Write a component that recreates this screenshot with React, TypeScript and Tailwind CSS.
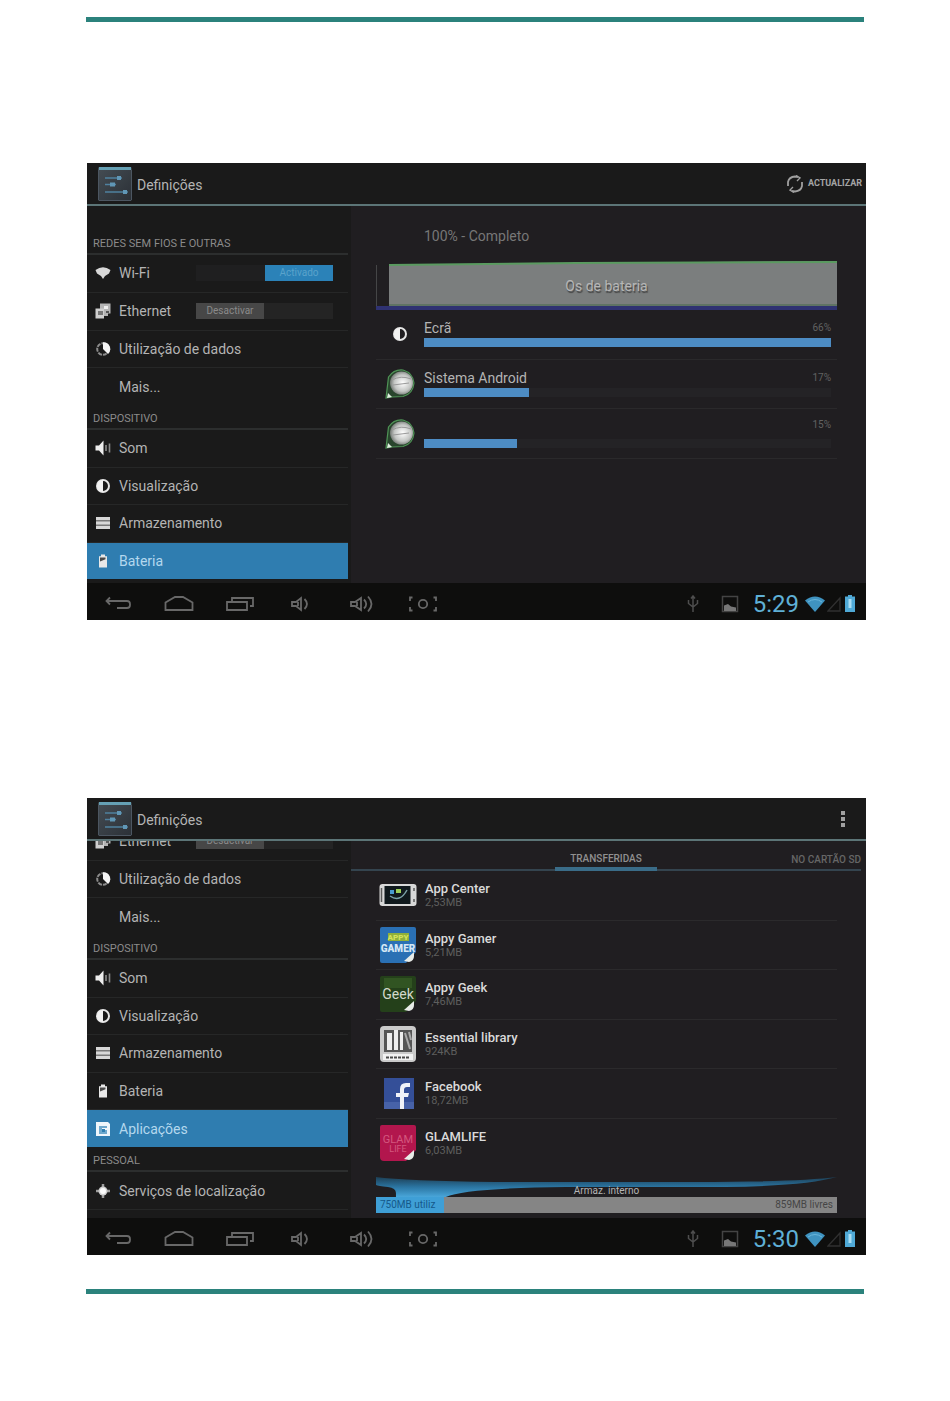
import type { ReactNode } from "react";

type IconName =
  | "wifi"
  | "ethernet"
  | "data"
  | "none"
  | "sound"
  | "display"
  | "storage"
  | "battery"
  | "apps"
  | "location";

function SideIcon({ name }: { name: IconName }) {
  return (
    <svg viewBox="0 0 16 16" className="h-4 w-4 shrink-0" fill="#d8d8d8" aria-hidden="true">
      {name === "wifi" && <path d="M.5 5Q8-.5 15.500 5L14 8.500 10 11 8 14 6 11 2 8.500Z" />}
      {name === "ethernet" && (
        <g>
          <path d="M5 .5h10.500v10H13V13H5Z" fill="#b4b4b4" />
          <path d="M.5 5.500h8.500v10H.5Z" fill="#cfcfcf" />
          <path d="M3 8h5v4H3Z" fill="#777777" />
          <path d="M9 3h4v3H9Z" fill="#ededed" />
          <path d="M11 8h3v2h-3Z" fill="#555555" />
        </g>
      )}
      {name === "data" && (
        <g>
          <circle cx="8" cy="8" r="5.800" fill="none" stroke="#8c8c8c" strokeWidth="2" strokeDasharray="4 1" />
          <path d="M8 1.200A6.800 6.800 0 0 1 13 13L8 8Z" fill="#f5f5f5" />
        </g>
      )}
      {name === "sound" && (
        <g>
          <path d="M.5 5.500H4L8.500.5v15L4 10.500H.5Z" fill="#eeeeee" />
          <path d="M11 5v6M14.500 3.500v9" stroke="#8a8a8a" strokeWidth="1.600" />
        </g>
      )}
      {name === "display" && (
        <g>
          <circle cx="8" cy="8" r="6" fill="none" stroke="#e6e6e6" strokeWidth="2" />
          <path d="M8 2A6 6 0 0 0 8 14Z" fill="#f2f2f2" />
        </g>
      )}
      {name === "storage" && <path d="M1 2h14v3.400H1ZM1 6.300h14v3.400H1ZM1 10.600h14v3.400H1Z" />}
      {name === "battery" && (
        <g>
          <path d="M6 1.500h4v1.800h2V14.500H4V3.300h2Z" fill="#e8e8e8" />
          <path d="M5 4.500h5.500v1.800L5 8.500Z" fill="#4a4a4a" />
        </g>
      )}
      {name === "apps" && (
        <g>
          <path d="M1 1h12l2 2v12H1Z" fill="#eef6fb" />
          <path d="M4 5h8v2H7v2h5v4H4Z" fill="#6fa9cd" />
          <path d="M7 8h3v3H7Z" fill="#2f7fb1" />
        </g>
      )}
      {name === "location" && (
        <g>
          <path d="M8 1v14M1 8h14" stroke="#9d9d9d" strokeWidth="2.500" />
          <circle cx="8" cy="8" r="4.500" fill="#cfcfcf" />
          <circle cx="8" cy="8" r="3" fill="#fafafa" />
        </g>
      )}
    </svg>
  );
}

function Toggle({ on, label }: { on: boolean; label: string }) {
  return (
    <button
      type="button"
      role="switch"
      aria-checked={on}
      aria-label={label}
      className={
        on
          ? "mr-[15px] flex h-4 w-[137px] shrink-0 justify-end bg-[#1f1f20]"
          : "mr-[15px] flex h-4 w-[137px] shrink-0 justify-start bg-[#242424]"
      }
    >
      <span
        className={
          on
            ? "h-4 w-[68px] bg-[#2b82b8] text-center text-[10px] leading-4 text-[#5aa3cb]"
            : "h-4 w-[68px] bg-[#474747] text-center text-[10px] leading-4 text-[#8a8a8a]"
        }
      >
        {on ? "Activado" : "Desactivar"}
      </span>
    </button>
  );
}

type Item = { icon: IconName; label: string; toggle?: boolean; active?: boolean };

function Group({ items, size }: { items: Item[]; size: string }) {
  return (
    <ul className={`flex flex-col ${size}`}>
      {items.map((item, i) => (
        <li
          key={item.label}
          className={
            item.active
              ? "flex flex-1 items-center bg-[#2f7db0] text-[#b4d8ee]"
              : i === items.length - 1
                ? "flex flex-1 items-center"
                : "flex flex-1 items-center border-b border-[#262727]"
          }
        >
          <a href="#" className="flex flex-1 items-center gap-2 pl-2 text-sm whitespace-nowrap">
            <SideIcon name={item.icon} />
            {item.label}
          </a>
          {item.toggle !== undefined && <Toggle on={item.toggle} label={item.label} />}
        </li>
      ))}
    </ul>
  );
}

function GroupTitle({ children }: { children: ReactNode }) {
  return (
    <h3 className="flex h-[25px] items-center border-b-2 border-[#2c2e2e] pt-1 pl-1.5 text-[11px] leading-4 text-[#8b8b8b]">
      {children}
    </h3>
  );
}

function SettingsLogo() {
  return (
    <svg viewBox="0 0 34 34" className="h-[34px] w-[34px] shrink-0" aria-hidden="true">
      <defs>
        <linearGradient id="tile" x1="0" y1="0" x2="1" y2="1">
          <stop offset="0" stopColor="#454d54" />
          <stop offset="1" stopColor="#2b3036" />
        </linearGradient>
      </defs>
      <rect width="34" height="34" rx="1.500" fill="url(#tile)" />
      <path d="M1 33.500h32M.5 3v30M33.500 3v30" stroke="#4c5661" />
      <path d="M1 0h32v3H1Z" fill="#65a0b4" />
      <path d="M7 11h17M7 17.500h11M7 25h23" stroke="#4f819f" strokeWidth="1.500" />
      <path d="M19 9h4v4h-4ZM12 15.500h5v4h-5ZM25 23h4v4h-4Z" fill="#6097b6" />
    </svg>
  );
}

function NavButton({ label, children }: { label: string; children: ReactNode }) {
  return (
    <button type="button" aria-label={label} className="flex w-[61px] justify-center">
      <svg viewBox="0 0 30 20" className="h-5 w-[30px]" fill="none" stroke="#686868" strokeWidth="1.800" aria-hidden="true">
        {children}
      </svg>
    </button>
  );
}

function NavBar({ time }: { time: string }) {
  return (
    <nav className="flex h-[37px] items-center bg-[#0e0e0d] pt-1 pr-[11px]">
      <NavButton label="Voltar">
        <path d="M4 7h20q3 0 3 3v1q0 3-3 3H14M7 3.500 3.500 7 7 10.500" />
      </NavButton>
      <NavButton label="Início">
        <path d="M1.500 16V8.500L11 3h8l9.500 5.500V16Z" />
      </NavButton>
      <NavButton label="Recentes">
        <path d="M2 8h20v8H2ZM7 7.500V4h21v8h-3" />
      </NavButton>
      <NavButton label="Diminuir volume">
        <path d="M6 8h4l5-4v12l-5-4H6ZM12 8v4M18.500 5q5 5 0 10" />
      </NavButton>
      <NavButton label="Aumentar volume">
        <path d="M4 8h4l6-4v12l-6-4H4ZM10 8v4M17 5.500q4.500 4.500 0 9M21 2.500q7 7.500 0 15" />
      </NavButton>
      <NavButton label="Captura de ecrã">
        <circle cx="15" cy="10" r="4.200" />
        <path d="M4.500 3.500H2V7M2 13v3.500h2.500M25.500 3.500H28V7M28 13v3.500h-2.500" />
      </NavButton>
      <div className="ml-auto flex items-center">
        <svg viewBox="0 0 12 18" className="mr-[22px] h-[18px] w-3" fill="none" stroke="#4e4e4e" strokeWidth="1.500" aria-hidden="true">
          <path d="M6 17V2M1.500 5v3.500L6 12l4.500-3.500V5M4 3.500 6 1l2 2.500" />
        </svg>
        <svg viewBox="0 0 18 18" className="mr-3.5 h-[18px] w-[18px]" aria-hidden="true">
          <path d="M1.500 1.500h15v15h-15Z" fill="none" stroke="#444444" strokeWidth="1.500" />
          <path d="M3 10.500 7 9l3 2.500 5 1V16H3Z" fill="#777777" />
        </svg>
        <time className="text-2xl leading-6 text-[#5fb0d6]">{time}</time>
        <svg viewBox="0 0 20 16" className="ml-1.5 h-4 w-5" aria-hidden="true">
          <path d="M0 4.500Q10-3.500 20 4.500L10 16Z" fill="#3f93c0" />
          <path d="M3 6Q10 1 17 6" fill="none" stroke="#69b6db" />
        </svg>
        <svg viewBox="0 0 14 16" className="ml-0.5 h-4 w-3.5" aria-hidden="true">
          <path d="M1 15 13 2v13Z" fill="none" stroke="#303030" strokeWidth="1.300" />
        </svg>
        <svg viewBox="0 0 10 17" className="ml-1 h-[17px] w-2.5" aria-hidden="true">
          <path d="M3 0h4v1.500h3V17H0V1.500h3Z" fill="#4fa9d6" />
          <path d="M3.500 4h3v9h-3Z" fill="#a9dcf2" />
        </svg>
      </div>
    </nav>
  );
}

function Screen({ action, side, time, children }: { action: ReactNode; side: ReactNode; time: string; children: ReactNode }) {
  return (
    <section className="bg-[#1a1a1a] text-[#b4b4b4]">
      <header className="flex h-[43px] items-center border-b-2 border-[#5c7577] pl-[11px]">
        <SettingsLogo />
        <h2 className="ml-[5px] flex-1 pt-0.5 text-sm">Definições</h2>
        {action}
      </header>
      <div className="flex h-[377px] overflow-hidden">
        <aside className="w-[264px] shrink-0 pr-[3px]">{side}</aside>
        <div className="min-w-0 flex-1 bg-[#201e21]">{children}</div>
      </div>
      <NavBar time={time} />
    </section>
  );
}

function AndroidIcon() {
  return (
    <svg viewBox="0 0 32 32" className="h-8 w-8" aria-hidden="true">
      <defs>
        <radialGradient id="ball" cx="0.550" cy="0.500" r="0.600">
          <stop offset="0" stopColor="#ffffff" />
          <stop offset="0.600" stopColor="#c4c6c4" />
          <stop offset="1" stopColor="#5c625d" />
        </radialGradient>
      </defs>
      <path d="M2 30 4.500 9Q10 1 19 2 29 5 30 15 29 26 19 28.500L8 29Z" fill="#29452d" stroke="#4f9456" strokeWidth="1.200" />
      <circle cx="17.500" cy="15" r="11.500" fill="url(#ball)" />
      <path d="M8 12q9-5 19-1M9 17l16-2" stroke="#9a9a9a" strokeWidth="1" fill="none" />
      <path d="M3 30 4 25l4 4Z" fill="#dff0df" />
    </svg>
  );
}

const usage = [
  { name: "Ecrã", pct: 66, screen: true },
  { name: "Sistema Android", pct: 17, screen: false },
  { name: "", pct: 15, screen: false },
];

function BatteryPanel() {
  return (
    <div className="pr-[29px] pl-[25px]">
      <p className="pt-5 pl-12 text-sm leading-5 text-[#777777]">100% - Completo</p>
      <div className="mt-[15px] grid h-[49px]">
        <svg viewBox="0 0 461 49" preserveAspectRatio="none" className="col-start-1 row-start-1 h-[49px] w-full" aria-hidden="true">
          <path d="M.5 4V45" stroke="#454647" />
          <path d="M13 4 200 2 461 0V45H13Z" fill="#7b7e7e" />
          <path d="M13 4 200 2 461 1" fill="none" stroke="#5a9a60" strokeWidth="2" />
          <path d="M13 44h448" stroke="#56705c" strokeWidth="1.500" />
          <path d="M0 45h461v4H0Z" fill="#2f3272" />
        </svg>
        <span className="col-start-1 row-start-1 self-center text-center text-sm text-[#b6b6b6] [text-shadow:1px_2px_1px_#444]">
          Os de bateria
        </span>
      </div>
      <ul className="flex h-[149px] flex-col">
        {usage.map((u) => (
          <li key={u.pct} className="flex flex-1 items-center border-b border-[#2a292b] pr-1.5">
            <span className="flex w-12 shrink-0 justify-center">{u.screen ? <SideIcon name="display" /> : <AndroidIcon />}</span>
            <div className="flex-1">
              <div className={u.name ? "flex h-5 items-end justify-between" : "flex h-5 items-start justify-end"}>
                {u.name && <span className="text-sm leading-5">{u.name}</span>}
                <span className={u.name ? "text-[10px] leading-5 text-[#626262]" : "text-[10px] leading-3 text-[#626262]"}>{u.pct}%</span>
              </div>
              <div className={u.name ? "mb-1 h-[9px] bg-[#242326]" : "h-[9px] bg-[#242326]"}>
                <div className="h-full bg-[#4d8cc4]" style={{ width: `${(u.pct / 66) * 100}%` }} />
              </div>
            </div>
          </li>
        ))}
      </ul>
    </div>
  );
}

function Fold() {
  return <path d="M25 35 35 26v4q0 5-5 6Z" fill="#e8ece8" />;
}

function AppIcon({ app }: { app: string }) {
  return (
    <svg viewBox="0 0 38 38" className="h-[38px] w-[38px] shrink-0 font-[Roboto,sans-serif]" aria-hidden="true">
      {app === "App Center" && (
        <g>
          <rect x="0.500" y="8" width="37" height="22" rx="3" fill="#d8d8d8" />
          <rect x="5.500" y="10" width="26" height="18" fill="#10191d" />
          <path d="M2.500 12v14M35 12v3M35 23v3" stroke="#5a5a5a" strokeWidth="1.500" />
          <path d="M11 14h4v4h-4Z" fill="#479bd0" />
          <path d="M17 13h5v4h-5Z" fill="#9bcf5a" />
          <path d="M11 20q10 7 17-6" stroke="#7ba2a8" fill="none" strokeWidth="1.500" />
        </g>
      )}
      {app === "Appy Gamer" && (
        <g>
          <path d="M3 1h32q2 0 2 2v23L27 37H3q-2 0-2-2V3q0-2 2-2Z" fill="#2a70b4" />
          <path d="M9 7h21v8H9Z" fill="#8fb03a" />
          <text x="19" y="14" textAnchor="middle" fontSize="8" fontWeight="900" fill="#d2e25c">APPY</text>
          <text x="19" y="26" textAnchor="middle" fontSize="10" fontWeight="900" fill="#d5e7f4">GAMER</text>
          <Fold />
        </g>
      )}
      {app === "Appy Geek" && (
        <g>
          <path d="M3 1h32q2 0 2 2v23L27 37H3q-2 0-2-2V3q0-2 2-2Z" fill="#24401a" />
          <path d="M5 3h28v10H5Z" fill="#315422" />
          <text x="19" y="24" textAnchor="middle" fontSize="14" fill="#d3d9cb">Geek</text>
          <Fold />
        </g>
      )}
      {app === "Essential library" && (
        <g>
          <rect x="1" y="1" width="36" height="36" rx="4" fill="#cacaca" />
          <path d="M5 5h28v22H5Z" fill="#555555" />
          <path d="M8 8h5v17H8ZM15 5h4v20h-4ZM21 7h3v18h-3Z" fill="#eeeeee" />
          <path d="m26 8 5 16M30 7l2 8" stroke="#a9a9a9" strokeWidth="2" />
          <path d="M4 29h30v6H4Z" fill="#f1f1f1" />
          <path d="M7 32.500h24" stroke="#4a4a4a" strokeWidth="2" strokeDasharray="3 1" />
        </g>
      )}
      {app === "Facebook" && (
        <g>
          <rect x="5" y="4" width="30" height="31" fill="#344f98" />
          <path d="M5 28h30v7H5Z" fill="#4762a8" />
          <path d="M21 35V23h-4v-4h4v-4q0-6 6-6h4v4h-3q-3 0-3 3v3h5l-1 4h-4v12Z" fill="#f0f2f8" />
        </g>
      )}
      {app === "GLAMLIFE" && (
        <g>
          <path d="M3 1h32q2 0 2 2v23L27 37H5q-4 0-4-4V3q0-2 2-2Z" fill="#b2164d" />
          <text x="19" y="19" textAnchor="middle" fontSize="11" fill="#d4587f">GLAM</text>
          <text x="19" y="28" textAnchor="middle" fontSize="9" fill="#d4587f">LIFE</text>
          <Fold />
        </g>
      )}
    </svg>
  );
}

const apps = [
  ["App Center", "2,53MB"],
  ["Appy Gamer", "5,21MB"],
  ["Appy Geek", "7,46MB"],
  ["Essential library", "924KB"],
  ["Facebook", "18,72MB"],
  ["GLAMLIFE", "6,03MB"],
];

function AppsPanel() {
  return (
    <div>
      <div role="tablist" className="mr-[5px] flex h-[30px] items-stretch justify-end border-b-2 border-[#34444f] text-[10px] font-medium">
        <button type="button" role="tab" aria-selected="true" className="-mb-0.5 w-[102px] border-b-4 border-[#3a6c88] pt-2 text-[#909090]">
          TRANSFERIDAS
        </button>
        <button type="button" role="tab" aria-selected="false" className="w-[204px] pt-2 text-right text-[#666666]">
          NO CARTÃO SD
        </button>
      </div>
      <div className="pr-[29px] pl-[25px]">
        <ul className="flex h-[296px] flex-col">
          {apps.map(([name, size], i) => (
            <li
              key={name}
              className={i < 5 ? "flex flex-1 items-center gap-2 border-b border-[#2b2a2c] pl-[3px]" : "flex flex-1 items-center gap-2 pl-[3px]"}
            >
              <AppIcon app={name} />
              <div>
                <p className="text-[13px] leading-[15px] font-medium text-[#dadada]">{name}</p>
                <p className="text-[11px] leading-[13px] text-[#5e5e5e]">{size}</p>
              </div>
            </li>
          ))}
        </ul>
        <div className="mt-2.5 grid h-5">
          <svg viewBox="0 0 462 20" preserveAspectRatio="none" className="col-start-1 row-start-1 h-5 w-full" aria-hidden="true">
            <defs>
              <linearGradient id="wave" x1="0" y1="0" x2="0" y2="1">
                <stop offset="0" stopColor="#1d3f55" />
                <stop offset="0.500" stopColor="#2b75a2" />
                <stop offset="1" stopColor="#49a6da" />
              </linearGradient>
            </defs>
            <path d="M0 0Q30 4 120 5H320Q420 5 462 0 430 9 350 10H190Q90 11 70 20H20V16Q20 11 12 10 2 9 0 8Z" fill="url(#wave)" />
          </svg>
          <span className="col-start-1 row-start-1 self-end text-center text-[10px] leading-3 text-[#b5b5b5]">Armaz. interno</span>
        </div>
        <div className="flex h-4 justify-between bg-[#858585] text-[10px] leading-4">
          <span className="w-[68px] bg-[#3f9fd6] pl-1 text-[#16598a]">750MB utiliz</span>
          <span className="pr-1 text-[#454545]">859MB livres</span>
        </div>
      </div>
    </div>
  );
}

const network: Item[] = [
  { icon: "wifi", label: "Wi-Fi", toggle: true },
  { icon: "ethernet", label: "Ethernet", toggle: false },
  { icon: "data", label: "Utilização de dados" },
  { icon: "none", label: "Mais..." },
];

const device: Item[] = [
  { icon: "sound", label: "Som" },
  { icon: "display", label: "Visualização" },
  { icon: "storage", label: "Armazenamento" },
];

export default function App() {
  return (
    <main className="bg-white pt-[17px] pb-[107px] font-[Roboto,'Noto_Sans',sans-serif]">
      <hr className="mx-[86px] h-[5px] border-0 bg-[#2b827c]" />
      <div className="mt-[141px] mr-[84px] mb-[34px] ml-[87px] flex flex-col gap-[178px]">
        <Screen
          time="5:29"
          action={
            <button type="button" className="mr-1 flex items-center gap-1 text-[9px] font-bold text-[#a5a5a5]">
              <svg viewBox="0 0 18 18" className="h-[18px] w-[18px]" fill="none" stroke="#a0a0a0" strokeWidth="1.800" aria-hidden="true">
                <path d="M2 11V7q1-5 7-5.500L12 2M16 7v4q-1 5-7 5.500L6 16" />
                <path d="M10 .5 14 3l-3 3M8 17.500 4 15l3-3" strokeWidth="1.400" />
              </svg>
              ACTUALIZAR
            </button>
          }
          side={
            <div className="pt-6">
              <GroupTitle>REDES SEM FIOS E OUTRAS</GroupTitle>
              <Group size="h-[150px]" items={network} />
              <GroupTitle>DISPOSITIVO</GroupTitle>
              <Group size="h-[149px]" items={[...device, { icon: "battery", label: "Bateria", active: true }]} />
            </div>
          }
        >
          <BatteryPanel />
        </Screen>
        <Screen
          time="5:30"
          action={
            <button type="button" aria-label="Mais opções" className="mr-4 flex w-3.5 flex-col items-center gap-0.5">
              <span className="h-1 w-1 bg-[#a0a0a0]" />
              <span className="h-1 w-1 bg-[#a0a0a0]" />
              <span className="h-1 w-1 bg-[#a0a0a0]" />
            </button>
          }
          side={
            <div className="-mt-[18px]">
              <Group size="h-[112px]" items={network.slice(1)} />
              <GroupTitle>DISPOSITIVO</GroupTitle>
              <Group
                size="h-[187px]"
                items={[...device, { icon: "battery", label: "Bateria" }, { icon: "apps", label: "Aplicações", active: true }]}
              />
              <GroupTitle>PESSOAL</GroupTitle>
              <Group size="h-[37px]" items={[{ icon: "location", label: "Serviços de localização" }]} />
              <div className="border-t border-[#262727]" />
            </div>
          }
        >
          <AppsPanel />
        </Screen>
      </div>
      <hr className="mx-[86px] h-[5px] border-0 bg-[#2b827c]" />
    </main>
  );
}
